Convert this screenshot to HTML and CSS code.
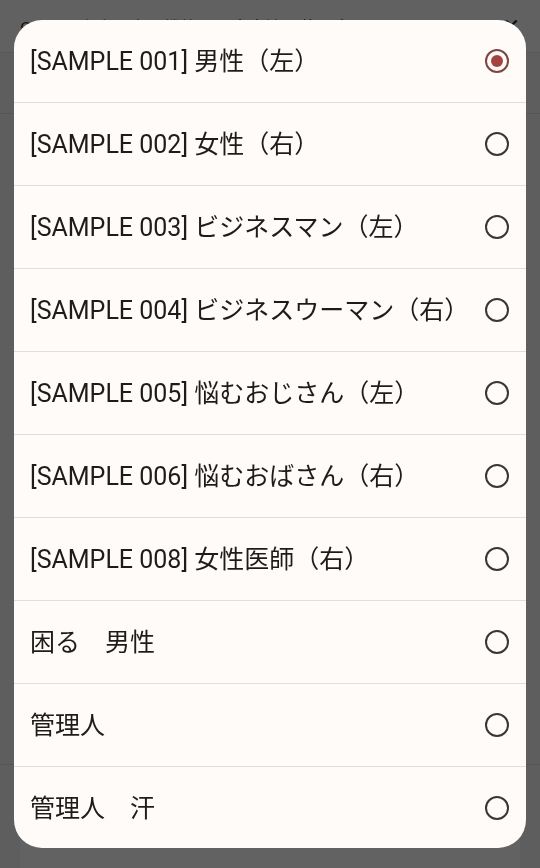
FILE: index.html
```html
<!DOCTYPE html>
<html lang="ja">
<head>
  <meta charset="UTF-8">
  <meta name="viewport" content="width=device-width, initial-scale=1.0">
  <title>吹き出し選択</title>
  <link rel="stylesheet" href="styles.css">
</head>
<body>

  <!-- Page behind the dialog -->
  <div class="page">
    <div class="page-header">
      <span class="page-title">Cocoon｜吹き出し機能の設定方法と使い方</span>
      <span class="page-close">✕</span>
    </div>
    <div class="page-section"></div>
    <div class="page-section tall"></div>
    <div class="page-card">
      <span class="page-radio"></span>
    </div>
  </div>

  <!-- Dialog -->
  <div class="overlay">
    <div class="dialog">
      <div class="option">
        <span class="label">[SAMPLE 001] 男性（左）</span>
        <span class="radio checked"></span>
      </div>
      <div class="option">
        <span class="label">[SAMPLE 002] 女性（右）</span>
        <span class="radio"></span>
      </div>
      <div class="option">
        <span class="label">[SAMPLE 003] ビジネスマン（左）</span>
        <span class="radio"></span>
      </div>
      <div class="option">
        <span class="label">[SAMPLE 004] ビジネスウーマン（右）</span>
        <span class="radio"></span>
      </div>
      <div class="option">
        <span class="label">[SAMPLE 005] 悩むおじさん（左）</span>
        <span class="radio"></span>
      </div>
      <div class="option">
        <span class="label">[SAMPLE 006] 悩むおばさん（右）</span>
        <span class="radio"></span>
      </div>
      <div class="option">
        <span class="label">[SAMPLE 008] 女性医師（右）</span>
        <span class="radio"></span>
      </div>
      <div class="option">
        <span class="label">困る　男性</span>
        <span class="radio"></span>
      </div>
      <div class="option">
        <span class="label">管理人</span>
        <span class="radio"></span>
      </div>
      <div class="option">
        <span class="label">管理人　汗</span>
        <span class="radio"></span>
      </div>
    </div>
  </div>

</body>
</html>
```

FILE: styles.css
```css
body {
  margin: 0;
  background-color: #ececec;
  font-family: Roboto, "Noto Sans CJK JP", sans-serif;
  height: 868px;
  overflow: hidden;
}

/* page behind */
.page {
  display: flex;
  flex-direction: column;
}
.page-header {
  height: 52px;
  display: flex;
  align-items: center;
  justify-content: space-between;
  padding: 0 20px;
  background-color: #f2f2f2;
  border-bottom: 1px solid #dcdcdc;
}
.page-title {
  font-size: 17px;
  color: #333;
}
.page-close {
  font-size: 20px;
  color: #222;
}
.page-section {
  height: 60px;
  border-bottom: 1px solid #d8d8d8;
}
.page-section.tall {
  height: 650px;
}
.page-card {
  margin: 0 20px;
  height: 120px;
  background-color: #f6f6f6;
  padding: 8px 26px;
}
.page-radio {
  display: block;
  width: 20px;
  height: 20px;
  border: 2px solid #777;
  border-radius: 50%;
}

/* dialog */
.overlay {
  position: fixed;
  inset: 0;
  background-color: rgba(0, 0, 0, 0.6);
  display: flex;
  align-items: center;
  justify-content: center;
}
.dialog {
  width: 512px;
  height: 828px;
  background-color: #fffbf8;
  border-radius: 28px;
  overflow: hidden;
}
.option {
  height: 82px;
  display: flex;
  align-items: center;
  justify-content: space-between;
  padding: 0 17px 0 16px;
  border-top: 1px solid #e2dedb;
}
.option:first-child {
  border-top: none;
}
.label {
  font-size: 25px;
  line-height: 1;
  color: #1f1b1a;
  white-space: nowrap;
}
.radio {
  width: 20px;
  height: 20px;
  border: 2.5px solid #3a3634;
  border-radius: 50%;
  display: flex;
  align-items: center;
  justify-content: center;
}
.radio.checked {
  border-color: #7e4541;
}
.radio.checked::after {
  content: "";
  width: 12px;
  height: 12px;
  border-radius: 50%;
  background-color: #a4423f;
}
```
